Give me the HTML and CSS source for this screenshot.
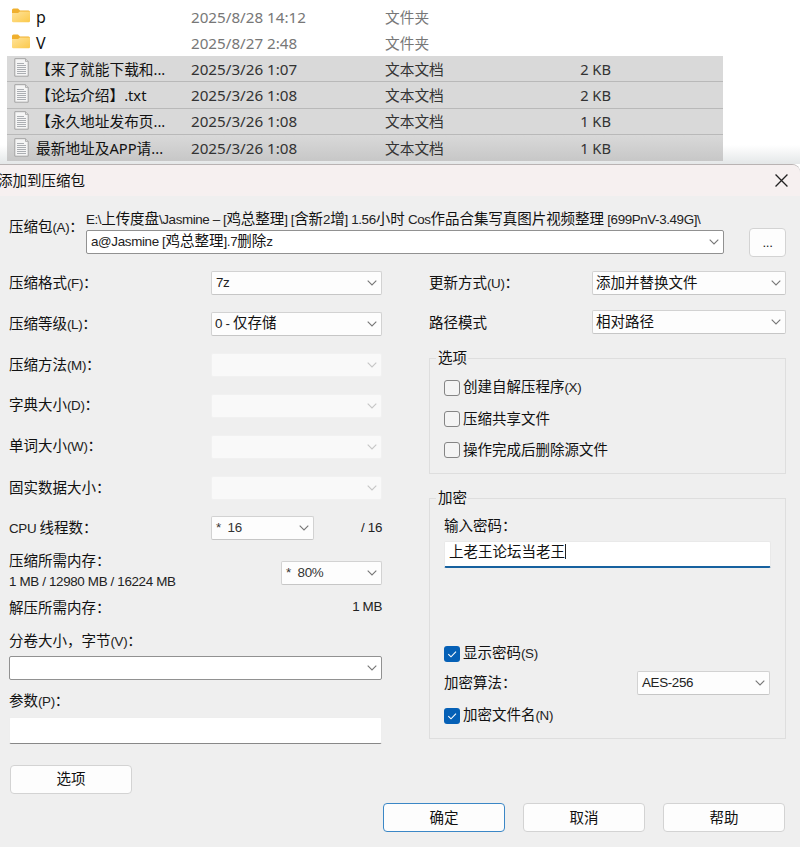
FILE: index.html
```html
<!DOCTYPE html>
<html lang="zh-CN">
<head>
<meta charset="utf-8">
<title>添加到压缩包</title>
<link rel="stylesheet" href="styles.css">
</head>
<body>
<svg class="defs" width="0" height="0">
  <defs>
    <linearGradient id="fg" x1="0" y1="0" x2="1" y2="1"><stop offset="0" stop-color="#ffe39a"/><stop offset="1" stop-color="#fbc94b"/></linearGradient>
    <symbol id="folder" viewBox="0 0 18 15"><path d="M0 2Q0 .5 1.500.5H6L8 2.500H16.500Q18 2.500 18 4V8H0Z" fill="#f0b02e"/><path d="M0 5H6L8 3.500H18V13Q18 14.300 16.700 14.300H1.300Q0 14.300 0 13Z" fill="url(#fg)"/></symbol>
    <symbol id="doc" viewBox="0 0 15 19"><path d="M.8.7H11.500L14.200 3.400V18.200H.8Z" fill="#f5f5f5" stroke="#a2a2a2"/><path d="M11.500.7V3.400H14.200" fill="#ddd" stroke="#a2a2a2" stroke-width=".8"/><path d="M3 5.500H10M3 7.500H12M3 9.500H12M3 11.500H12M3 13.500H12M3 15.500H12" stroke="#a3a6aa" stroke-width=".9"/></symbol>
    <symbol id="chev" viewBox="0 0 10 6"><path d="M.7.7L5 5L9.300.7" fill="none" stroke="currentColor" stroke-width="1.1"/></symbol>
    <symbol id="tick" viewBox="0 0 16 16"><path d="M4.300 8.200L7 10.800L12 5.700" fill="none" stroke="#fff" stroke-width="1.1"/></symbol>
  </defs>
</svg>
<div class="files">
  <div class="file"><svg class="folder"><use href="#folder"/></svg><span class="name short">p</span><span class="date">2025/8/28 14:12</span><span class="type">文件夹</span></div>
  <div class="file"><svg class="folder"><use href="#folder"/></svg><span class="name short">V</span><span class="date">2025/8/27 2:48</span><span class="type">文件夹</span></div>
  <div class="file sel"><svg class="doc"><use href="#doc"/></svg><span class="name">【来了就能下载和...</span><span class="date">2025/3/26 1:07</span><span class="type">文本文档</span><span class="size">2 KB</span></div>
  <div class="file sel"><svg class="doc"><use href="#doc"/></svg><span class="name">【论坛介绍】.txt</span><span class="date">2025/3/26 1:08</span><span class="type">文本文档</span><span class="size">2 KB</span></div>
  <div class="file sel"><svg class="doc"><use href="#doc"/></svg><span class="name">【永久地址发布页...</span><span class="date">2025/3/26 1:08</span><span class="type">文本文档</span><span class="size">1 KB</span></div>
  <div class="file sel last"><svg class="doc"><use href="#doc"/></svg><span class="name">最新地址及APP请...</span><span class="date">2025/3/26 1:08</span><span class="type">文本文档</span><span class="size">1 KB</span></div>
</div>
<div class="dialog">
  <div class="titlebar"><span>添加到压缩包</span><svg class="close" viewBox="0 0 12 12"><path d="M.5.5L11.500 11.500M11.500.5L.5 11.500" stroke="#222" stroke-width="1.200"/></svg></div>
  <div class="archive">
    <div class="archive-label">压缩包<i>(A)</i>：</div>
    <div class="archive-main">
      <div class="path"><i>E:\</i>上传度盘<i>\Jasmine – [</i>鸡总整理<i>] [</i>含新<i>2</i>增<i>] 1.56</i>小时<i> Cos</i>作品合集写真图片视频整理<i> [699PnV-3.49G]\</i></div>
      <div class="select dark"><span><i>a@Jasmine [</i>鸡总整理<i>].7</i>删除<i>z</i></span><svg class="chev"><use href="#chev"/></svg></div>
    </div>
    <div class="btn browse"><i>...</i></div>
  </div>
  <div class="columns">
    <div class="left">
      <div class="row"><span>压缩格式<i>(F)</i>：</span><div class="select w171"><i>7z</i><svg class="chev"><use href="#chev"/></svg></div></div>
      <div class="row"><span>压缩等级<i>(L)</i>：</span><div class="select w171"><span><i>0 - </i>仅存储</span><svg class="chev"><use href="#chev"/></svg></div></div>
      <div class="row"><span>压缩方法<i>(M)</i>：</span><div class="select w171 off"><svg class="chev"><use href="#chev"/></svg></div></div>
      <div class="row"><span>字典大小<i>(D)</i>：</span><div class="select w171 off"><svg class="chev"><use href="#chev"/></svg></div></div>
      <div class="row"><span>单词大小<i>(W)</i>：</span><div class="select w171 off"><svg class="chev"><use href="#chev"/></svg></div></div>
      <div class="row"><span>固实数据大小：</span><div class="select w171 off"><svg class="chev"><use href="#chev"/></svg></div></div>
      <div class="row cpu"><span class="cpu-label"><i>CPU </i>线程数：</span><div class="select w103"><i class="num">*&nbsp; 16</i><svg class="chev"><use href="#chev"/></svg></div><i class="total">/ 16</i></div>
      <div class="memory"><div><div class="mem1">压缩所需内存：</div><div class="mem2"><i>1 MB / 12980 MB / 16224 MB</i></div></div><div class="select w101"><i class="num">*&nbsp; 80%</i><svg class="chev"><use href="#chev"/></svg></div></div>
      <div class="row unpack"><span>解压所需内存：</span><i>1 MB</i></div>
      <div class="volume">分卷大小，字节<i>(V)</i>：</div>
      <div class="select dark"><svg class="chev"><use href="#chev"/></svg></div>
      <div class="params">参数<i>(P)</i>：</div>
      <div class="input"></div>
      <div class="btn options">选项</div>
    </div>
    <div class="right">
      <div class="row r1"><span>更新方式<i>(U)</i>：</span><div class="select w194"><span>添加并替换文件</span><svg class="chev"><use href="#chev"/></svg></div></div>
      <div class="row r2"><span>路径模式</span><div class="select w194"><span>相对路径</span><svg class="chev"><use href="#chev"/></svg></div></div>
      <div class="group g1">
        <div class="legend">选项</div>
        <div class="check"><b></b><span>创建自解压程序<i>(X)</i></span></div>
        <div class="check"><b></b><span>压缩共享文件</span></div>
        <div class="check"><b></b><span>操作完成后删除源文件</span></div>
      </div>
      <div class="group g2">
        <div class="legend">加密</div>
        <div class="pw-label">输入密码：</div>
        <div class="password">上老王论坛当老王<span class="caret"></span></div>
        <div class="check"><b class="on"><svg><use href="#tick"/></svg></b><span>显示密码<i>(S)</i></span></div>
        <div class="row algo"><span>加密算法：</span><div class="select w133"><i>AES-256</i><svg class="chev"><use href="#chev"/></svg></div></div>
        <div class="check name-check"><b class="on"><svg><use href="#tick"/></svg></b><span>加密文件名<i>(N)</i></span></div>
      </div>
    </div>
  </div>
  <div class="actions"><div class="btn primary">确定</div><div class="btn">取消</div><div class="btn">帮助</div></div>
</div>
</body>
</html>
```
FILE: styles.css
```css
* { box-sizing: border-box; }
body { margin: 0; width: 800px; height: 847px; overflow: hidden; background: #fff; color: #111; font: 14.5px/20px "Noto Sans CJK SC", sans-serif; font-weight: 400; white-space: nowrap; }
i { font: 13.4px/20px "Liberation Sans", sans-serif; letter-spacing: -0.35px; white-space: pre; color: #222; }
.defs { position: absolute; }
.files { height: 164px; padding-top: 4px; background: linear-gradient(#fff 145px, #e4e7e8 164px); }
.file { display: grid; grid-template-columns: 29px 155px 194px 139px 87px; align-items: center; width: 716px; height: 26px; margin-left: 7px; color: #777; font-family: "Noto Sans", "Noto Sans CJK SC", sans-serif; font-size: 14.7px; }
.sel { height: 26.3px; background: #d9d9d9; border-bottom: 1px solid #b9b9b9; color: #333; }
.last { border: 0; background: linear-gradient(#d9d9d9, #c7c7c7); }
.name { color: #111; }
.short { font-size: 16px; }
.date { font-size: 15.2px; }
.size { text-align: right; }
.folder { width: 18px; height: 15px; margin: -3px 0 0 5px; }
.doc { width: 15px; height: 19px; margin: -2px 0 0 7px; }
.dialog { height: 683px; background: #efefef; border-top: 1px solid #b9b3b3; border-top-right-radius: 8px; }
.titlebar { height: 31px; display: flex; justify-content: space-between; align-items: center; padding-right: 12px; background: #f6f0f0; border-top-right-radius: 8px; }
.titlebar span { margin: -2px 0 0 -2px; }
.close { width: 13px; height: 13px; margin-top: -1px; }
.archive { display: grid; grid-template-columns: 77px 638px 62px; padding: 12px 0 0 9px; height: 67px; }
.archive-label { padding-top: 8px; }
.btn { display: flex; align-items: center; justify-content: center; width: 122px; height: 29px; background: #fdfdfd; border: 1px solid #d3d3d3; border-radius: 4px; padding-bottom: 2px; }
.browse { width: 37px; height: 29px; margin: 20px 0 0 25px; padding: 0; }
.path { height: 22px; letter-spacing: -0.05px; }
.path i { letter-spacing: -0.4px; }
.select { display: flex; align-items: center; justify-content: space-between; height: 24px; padding: 0 4px; background: #fdfdfd; border: 1px solid #d2d2d2; border-bottom-color: #c6c6c6; border-radius: 2px; }
.select > span { margin: -3px 0 0 -1px; }
.dark { border-color: #919191; background: #fff; }
.archive .dark > span { margin-left: 0; }
.off { border-color: #f1f1f1; background: #f9f9f9; }
.chev { width: 10px; height: 6px; margin-left: auto; color: #777; }
.off .chev { color: #c6c6c6; }
.w171 { width: 171px; }
.w103 { width: 103px; }
.w101 { width: 101px; }
.w194 { width: 194px; }
.w133 { width: 133px; }
.num { color: #333; }
.columns { display: grid; grid-template-columns: 373px 357px; column-gap: 47px; padding-left: 9px; height: 540px; }
.left { display: flex; flex-direction: column; }
.row { display: flex; align-items: center; justify-content: space-between; height: 40.85px; }
.row > span { margin-top: -1px; }
.cpu-label { width: 202px; }
.total { width: 68px; text-align: right; }
.memory { display: flex; justify-content: space-between; height: 45px; padding-top: 1px; }
.memory .select { margin-top: 11px; }
.mem1, .mem2 { height: 20px; }
.unpack { height: 27px; }
.volume { height: 35px; padding-top: 9px; }
.params { height: 37px; padding-top: 10px; }
.input { height: 27px; background: #fff; border: 1px solid #eee; border-bottom: 1px solid #888; border-radius: 2px; }
.options { margin: 21px 0 0 1px; }
.r1 { height: 40px; }
.r2 { height: 38px; }
.group { border: 1px solid #dedede; }
.legend { width: 32px; height: 20px; margin: -12px 0 0 6px; padding-left: 2px; background: #efefef; }
.g1 { height: 116px; margin-top: 17px; }
.g1 .legend { margin-bottom: 5px; }
.check { display: flex; align-items: center; gap: 3px; height: 31px; margin-left: 14px; }
.check span { margin-top: -1px; }
b { width: 16px; height: 16px; border: 1px solid #858585; border-radius: 3px; background: #f4f4f4; }
.on { border: 0; background: #0560b6; }
.on svg { display: block; width: 16px; height: 16px; }
.g2 { height: 241px; margin-top: 24px; }
.pw-label { margin: 8px 0 0 14px; }
.password { display: flex; height: 27px; width: 327px; margin: 6px 0 70px 14px; padding: 0 4px; line-height: 18px; background: #fff; border: 1px solid #e9e9e9; border-bottom: 2px solid #17619f; border-radius: 2px; }
.caret { width: 1px; height: 15px; margin-top: 2px; background: #222; }
.algo { height: 29px; padding: 0 15px 0 14px; }
.algo > span { margin-top: -3px; }
.algo .select { margin-top: -1px; }
.name-check { margin-top: 2px; }
.actions { display: flex; gap: 18px; padding-left: 383px; }
.primary { border-color: #3b87c6; }
```
